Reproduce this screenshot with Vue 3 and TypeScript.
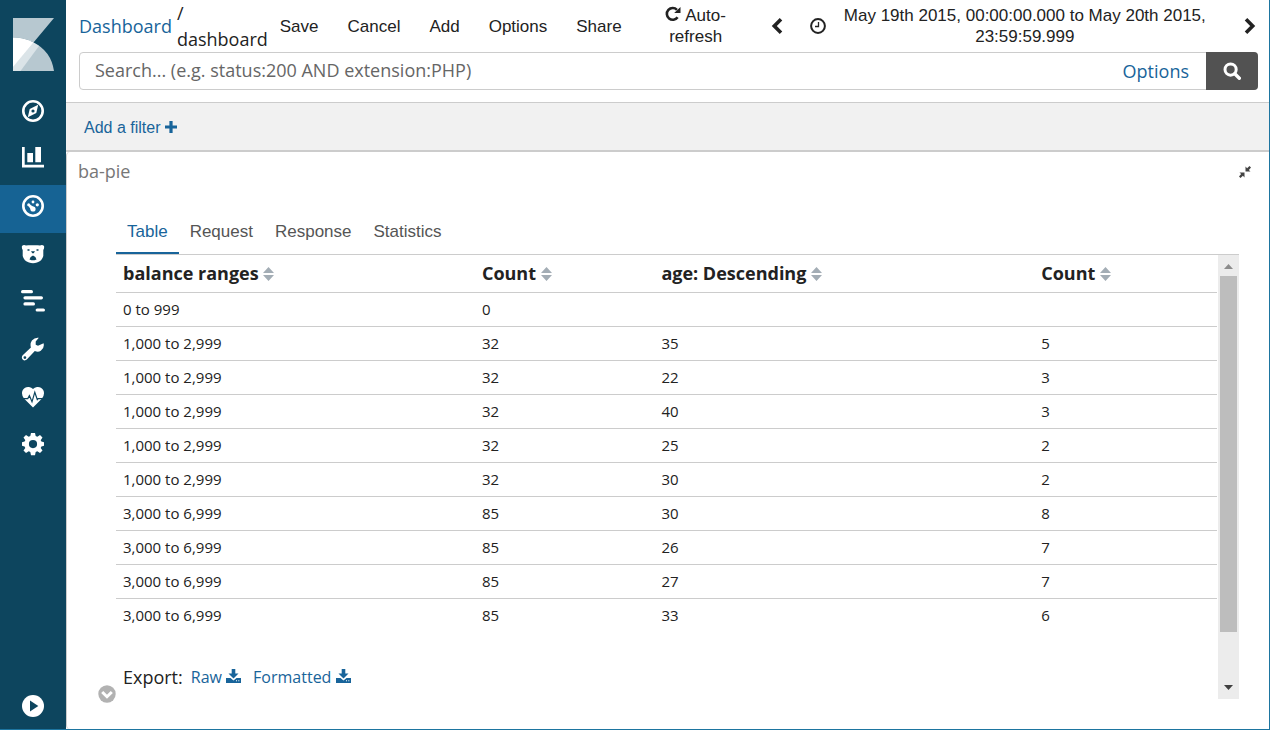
<script setup lang="ts">
import { ref } from 'vue'

interface NavItem {
  id: string
  label: string
}

const navItems: NavItem[] = [
  { id: 'discover', label: 'Discover' },
  { id: 'visualize', label: 'Visualize' },
  { id: 'dashboard', label: 'Dashboard' },
  { id: 'timelion', label: 'Timelion' },
  { id: 'apm', label: 'APM' },
  { id: 'devtools', label: 'Dev Tools' },
  { id: 'monitoring', label: 'Monitoring' },
  { id: 'management', label: 'Management' },
]
const activeNav = ref('dashboard')

const menu = ['Save', 'Cancel', 'Add', 'Options', 'Share']
const tabs = ['Table', 'Request', 'Response', 'Statistics']
const activeTab = ref('Table')
const query = ref('')

const columns = ['balance ranges', 'Count', 'age: Descending', 'Count']
const rows: string[][] = [
  ['0 to 999', '0', '', ''],
  ['1,000 to 2,999', '32', '35', '5'],
  ['1,000 to 2,999', '32', '22', '3'],
  ['1,000 to 2,999', '32', '40', '3'],
  ['1,000 to 2,999', '32', '25', '2'],
  ['1,000 to 2,999', '32', '30', '2'],
  ['3,000 to 6,999', '85', '30', '8'],
  ['3,000 to 6,999', '85', '26', '7'],
  ['3,000 to 6,999', '85', '27', '7'],
  ['3,000 to 6,999', '85', '33', '6'],
]
const exportsList = ['Raw', 'Formatted']
</script>

<template>
  <div class="app">
    <aside class="sidebar">
      <a href="#" class="logo" aria-label="Home">
        <svg width="41" height="53" viewBox="0 0 41 53">
          <path d="M0 0H41L20.500 24.500Q11 19.500 0 19.500Z" fill="#b7c8d0" />
          <path d="M20.500 24.500Q38 33 41 53H0V19.500Q11 19.500 20.500 24.500Z" fill="#b7c8d0" />
          <path d="M20.500 24.500L26 28L7.500 53H0V48.500Z" fill="#dbe4e8" />
          <path d="M0 19.500Q11 19.500 20.500 24.500L0 49Z" fill="#fff" />
        </svg>
      </a>
      <nav class="nav">
        <a
          v-for="item in navItems"
          :key="item.id"
          href="#"
          class="nav-item"
          :class="{ active: item.id === activeNav }"
          :aria-label="item.label"
          @click.prevent="activeNav = item.id"
        >
          <svg width="24" height="24" viewBox="0 0 24 24" fill="#fff">
            <template v-if="item.id === 'discover'">
              <circle cx="12" cy="12" r="9.700" fill="none" stroke="#fff" stroke-width="2.600" />
              <path fill-rule="evenodd" d="M17.200 5.700L15.300 14L6.800 18.300L8.700 10ZM12 10.400a1.600 1.600 0 1 0 0 3.200a1.600 1.600 0 0 0 0-3.200Z" />
            </template>
            <template v-else-if="item.id === 'visualize'">
              <path d="M1 1H3.700V18.800H23V21.500H1ZM6.300 7H12V16.300H6.300ZM14.300 1H20V16.300H14.300Z" />
            </template>
            <template v-else-if="item.id === 'dashboard'">
              <circle cx="12" cy="12" r="9.700" fill="none" stroke="#fff" stroke-width="2.600" />
              <circle cx="12" cy="8" r="1.400" />
              <circle cx="7.700" cy="10.800" r="1.500" />
              <circle cx="16.300" cy="10.800" r="1.600" />
              <circle cx="12" cy="15" r="2.600" />
              <path d="M7 11.500L8.600 10.200L14.200 14L11 17Z" />
            </template>
            <template v-else-if="item.id === 'timelion'">
              <path fill-rule="evenodd" d="M1 4Q2.500 2.500 5 3.500Q7 3 8.500 3.300H15.500Q17 3 19 3.500Q21.500 2.500 23 4Q23.500 6 22.300 8V14Q21 19 16 20.500Q12 22 8 20.500Q3 19 1.700 14V8Q.5 6 1 4ZM6.500 7.300V8.700H8.500V7.300ZM15.500 7.300V8.700H17.500V7.300ZM10 9.300L11.300 11.200H12.700L14 9.300ZM12 13.600Q9 14.500 8.500 17.500L10.500 18.300H13.500L15.500 17.500Q15 14.500 12 13.600Z" />
            </template>
            <template v-else-if="item.id === 'apm'">
              <g stroke="#fff" stroke-width="3.200" stroke-linecap="round">
                <path d="M1.600 2.700H10.400M4 8.800H20.400M4 14.900H12.400M16.200 21H22.400" />
              </g>
            </template>
            <template v-else-if="item.id === 'devtools'">
              <path fill-rule="evenodd" d="M17.800.8L14.700 4.500V7.700L17 8.700L22.600 6.300Q23.700 11 19.800 13.800Q17 15.400 13.800 14L5.800 22.600Q3.500 24.300 1.700 22.400Q0 20.500 1.700 18.300L9.900 10.600Q8.800 6.700 10.900 3.600Q13.800.2 17.800.8ZM3.900 19.200a1.400 1.400 0 1 0 0 2.800a1.400 1.400 0 0 0 0-2.800Z" />
            </template>
            <template v-else-if="item.id === 'monitoring'">
              <path d="M12 22.500L3 13.500Q-.3 9 1.800 5Q4 1.500 8 2Q10.500 2.500 12 4Q13.500 2.500 16 2Q20 1.500 22.200 5Q24.300 9 21 13.500Z" />
              <path d="M2 13.600H6.800L8.400 10.600L11 16.800L13.800 7.200L16.300 14.600L17.300 13.600H22" fill="none" stroke="#0d455e" stroke-width="1.200" />
            </template>
            <template v-else>
              <path fill-rule="evenodd" d="M10 1H14L14.700 4L16.300 4.700L19 3L21.500 5.500L19.700 8.200L20.400 9.600L23 10.200V13.800L20.400 14.400L19.700 15.900L21.500 18.500L19 21L16.300 19.300L14.700 20L14 23.300H10L9.300 20L7.700 19.300L5 21L2.500 18.500L4.300 15.900L3.600 14.400L1 13.800V10.200L3.600 9.600L4.300 8.200L2.500 5.500L5 3L7.700 4.700L9.300 4ZM12 8a4.100 4.100 0 1 0 0 8.200a4.100 4.100 0 0 0 0-8.200Z" />
            </template>
          </svg>
        </a>
      </nav>
      <button type="button" class="expand" aria-label="Expand navigation">
        <svg width="22" height="22" viewBox="0 0 22 22">
          <circle cx="11" cy="11" r="11" fill="#fff" />
          <path d="M8 5.500L16.300 11L8 16.500Z" fill="#0d455e" />
        </svg>
      </button>
    </aside>

    <main class="main">
      <header class="top">
        <div class="crumbs">
          <a href="#">Dashboard</a>
          <span class="current">/ dashboard</span>
        </div>
        <div class="menu">
          <button v-for="m in menu" :key="m" type="button">{{ m }}</button>
        </div>
        <button type="button" class="refresh">
          <svg width="16" height="16" viewBox="0 0 16 16">
            <path d="M12.600 11.300A5.900 5.900 0 1 1 12 3.800" fill="none" stroke="#222" stroke-width="2.600" />
            <path d="M15.500 1V7H9.200Z" fill="#222" />
          </svg>
          Auto-refresh
        </button>
        <button type="button" class="step" aria-label="Previous period">
          <svg width="12" height="16" viewBox="0 0 12 16">
            <path d="M10 1.300L3.300 8L10 14.700" fill="none" stroke="#222" stroke-width="3.600" />
          </svg>
        </button>
        <button type="button" class="range">
          <svg width="16" height="16" viewBox="0 0 16 16">
            <circle cx="8" cy="8" r="6.900" fill="none" stroke="#222" stroke-width="2" />
            <path d="M8.500 4V8.500H5" fill="none" stroke="#222" stroke-width="1.300" />
          </svg>
          <span>May 19th 2015, 00:00:00.000 to May 20th 2015, 23:59:59.999</span>
        </button>
        <button type="button" class="step" aria-label="Next period">
          <svg width="12" height="16" viewBox="0 0 12 16">
            <path d="M2 1.300L8.700 8L2 14.700" fill="none" stroke="#222" stroke-width="3.600" />
          </svg>
        </button>
      </header>

      <form class="search" @submit.prevent>
        <input v-model="query" type="text" aria-label="Search" placeholder="Search... (e.g. status:200 AND extension:PHP)" />
        <a href="#">Options</a>
        <button type="submit" aria-label="Search">
          <svg width="18" height="18" viewBox="0 0 18 18">
            <circle cx="7.600" cy="7.600" r="5.600" fill="none" stroke="#fff" stroke-width="3" />
            <path d="M11.800 11.800L16.300 16.300" stroke="#fff" stroke-width="3.400" stroke-linecap="round" />
          </svg>
        </button>
      </form>

      <div class="filters">
        <a href="#">
          Add a filter
          <svg width="12" height="12" viewBox="0 0 12 12">
            <path d="M4.400 0H7.600V4.400H12V7.600H7.600V12H4.400V7.600H0V4.400H4.400Z" fill="#18649a" />
          </svg>
        </a>
      </div>

      <section class="panel">
        <div class="panel-head">
          <h2>ba-pie</h2>
          <button type="button" aria-label="Exit full screen">
            <svg width="12" height="12" viewBox="0 0 12 12" fill="#444">
              <path d="M6.500.5V5.500H11.500L9.900 4L12 1.500L10.500 0L8.100 2.200ZM5.500 11.500V6.500H.5L2.100 8L0 10.500L1.500 12L3.900 9.800Z" />
            </svg>
          </button>
        </div>

        <div class="spy">
          <div class="tabs" role="tablist">
            <button
              v-for="t in tabs"
              :key="t"
              type="button"
              role="tab"
              :aria-selected="t === activeTab"
              :class="{ selected: t === activeTab }"
              @click="activeTab = t"
            >
              {{ t }}
            </button>
          </div>

          <div class="body">
            <div class="content">
              <table>
                <colgroup>
                  <col class="c-range" />
                  <col class="c-count" />
                  <col class="c-age" />
                  <col />
                </colgroup>
                <thead>
                  <tr>
                    <th v-for="(c, i) in columns" :key="i" scope="col">
                      {{ c }}
                      <svg width="11" height="14" viewBox="0 0 11 14" fill="#a3adb5">
                        <path d="M5.500 0L11 6H0ZM0 8H11L5.500 14Z" />
                      </svg>
                    </th>
                  </tr>
                </thead>
                <tbody>
                  <tr v-for="(r, i) in rows" :key="i">
                    <td v-for="(cell, j) in r" :key="j">{{ cell }}</td>
                  </tr>
                </tbody>
              </table>
              <div class="export">
                <span>Export:</span>
                <a v-for="e in exportsList" :key="e" href="#">
                  {{ e }}
                  <svg width="15" height="14" viewBox="0 0 15 14" fill="#18649a">
                    <path d="M5.700 0H9.300V4.500H12.500L7.500 9.500L2.500 4.500H5.700Z" />
                    <path fill-rule="evenodd" d="M0 9H4.500L7.500 11.500L10.500 9H15V14H0ZM10 11.300V12.300H11V11.300ZM12.300 11.300V12.300H13.300V11.300Z" />
                  </svg>
                </a>
              </div>
            </div>
            <div class="scroll" aria-hidden="true">
              <svg width="9" height="5" viewBox="0 0 9 5"><path d="M0 5L4.500 0L9 5Z" fill="#8c8c8c" /></svg>
              <div class="track"><div class="thumb"></div></div>
              <svg width="9" height="5" viewBox="0 0 9 5"><path d="M0 0H9L4.500 5Z" fill="#404040" /></svg>
            </div>
          </div>
        </div>

        <button type="button" class="collapse" aria-label="Collapse details">
          <svg width="18" height="18" viewBox="0 0 18 18">
            <circle cx="9" cy="9" r="8.700" fill="#b2b2b2" />
            <path d="M4.200 7L9 11.700L13.800 7" fill="none" stroke="#fff" stroke-width="3" />
          </svg>
        </button>
      </section>
    </main>
  </div>
</template>

<style>
body {
  margin: 0;
}
</style>

<style scoped>
* {
  box-sizing: border-box;
}

.app {
  display: flex;
  min-height: 100vh;
  border-right: 1px solid #1d75a0;
  border-bottom: 1px solid #1d75a0;
  background: #fff;
  color: #222;
  font-family: "Open Sans", "Noto Sans", sans-serif;
  font-size: 18px;
}

a {
  color: #18649a;
  text-decoration: none;
}

button {
  margin: 0;
  padding: 0;
  border: 0;
  background: none;
  color: inherit;
  font: 17px/21px "Liberation Sans", Arial, sans-serif;
  cursor: pointer;
}

svg {
  flex: none;
}

.sidebar {
  flex: none;
  width: 66px;
  display: flex;
  flex-direction: column;
  align-items: center;
  padding: 18px 0 12px;
  background: #0d455e;
}

.logo,
.logo svg,
.expand svg,
.collapse svg {
  display: block;
}

.nav {
  width: 100%;
  height: 381px;
  margin-top: 19px;
  display: grid;
  grid-auto-rows: 1fr;
}

.nav-item {
  display: flex;
  align-items: center;
  justify-content: center;
  padding-bottom: 6px;
}

.nav-item.active {
  background: #166394;
}

.expand {
  margin-top: auto;
}

.main {
  flex: 1;
  min-width: 0;
  display: flex;
  flex-direction: column;
}

.top {
  height: 52px;
  display: flex;
  align-items: center;
  padding: 0 13px;
}

.crumbs {
  display: flex;
  align-items: center;
  gap: 5px;
}

.current {
  width: min-content;
  line-height: 26px;
}

.menu {
  display: flex;
  gap: 29px;
  margin-left: 12px;
}

.refresh {
  width: 84px;
  margin-left: 32px;
}

.refresh svg {
  vertical-align: -1px;
}

.step {
  display: flex;
}

.refresh + .step {
  margin-left: 33px;
}

.range {
  flex: 1;
  display: flex;
  align-items: center;
  margin: 0 20px 0 27px;
}

.range span {
  flex: 1;
}

.search {
  display: flex;
  align-items: center;
  height: 38px;
  margin: 0 11px 0 13px;
  border: 1px solid #ccc;
  border-radius: 4px;
}

.search input {
  flex: 1;
  min-width: 0;
  height: 100%;
  padding: 0 15px 2px;
  border: 0;
  outline: 0;
  background: none;
  color: #222;
  font: 18px "Open Sans", sans-serif;
}

.search input::placeholder {
  color: #666;
  opacity: 1;
}

.search a {
  padding: 0 18px;
}

.search button {
  width: 52px;
  height: 38px;
  margin: -1px;
  display: flex;
  align-items: center;
  justify-content: center;
  border-radius: 0 4px 4px 0;
  background: #525252;
}

.filters {
  height: 50px;
  margin-top: 12px;
  padding: 2px 18px 0;
  display: flex;
  align-items: center;
  border-top: 1px solid #ccc;
  border-bottom: 2px solid #ccc;
  background: #f1f1f1;
  font: 16px "Liberation Sans", Arial, sans-serif;
}

.panel {
  position: relative;
  flex: 1;
  padding: 0 30px 30px 49px;
  border-left: 1px solid #ccc;
  border-radius: 4px;
}

.panel-head {
  display: flex;
  align-items: center;
  justify-content: space-between;
  height: 40px;
  margin: 0 -12px 0 -38px;
}

.panel-head h2 {
  margin: 0;
  padding-bottom: 2px;
  color: #777;
  font-size: 18px;
  font-weight: 400;
}

.tabs {
  display: flex;
  height: 63px;
  border-bottom: 1px solid #ccc;
}

.tabs button {
  padding: 18px 11px 0;
  color: #555;
  border-bottom: 2px solid transparent;
}

.tabs .selected {
  border-bottom-color: #18649a;
  color: #18649a;
}

.body {
  display: flex;
}

.content {
  flex: 1;
}

table {
  width: 100%;
  table-layout: fixed;
  border-collapse: collapse;
}

.c-range {
  width: 32.6%;
}

.c-count {
  width: 16.3%;
}

.c-age {
  width: 34.5%;
}

th {
  height: 37px;
  padding: 0 7px;
  text-align: left;
  font-size: 18px;
  font-weight: 700;
}

th svg {
  vertical-align: -1px;
}

td {
  height: 34px;
  padding: 0 7px;
  border-top: 1px solid #ccc;
  font-size: 15px;
}

.export {
  display: flex;
  align-items: center;
  gap: 12px;
  height: 44px;
  margin: 23px 7px 0;
}

.export a {
  font-size: 16px;
}

.export span {
  margin-right: -4px;
}

.scroll {
  width: 21px;
  margin-left: 1px;
  display: flex;
  flex-direction: column;
  align-items: center;
  padding: 9px 0;
  background: #ececec;
}

.track {
  flex: 1;
  width: 17px;
  padding: 7px 0 4px;
}

.thumb {
  height: 88%;
  background: #bdbdbd;
}

.collapse {
  position: absolute;
  left: 31px;
  bottom: 26px;
}
</style>
